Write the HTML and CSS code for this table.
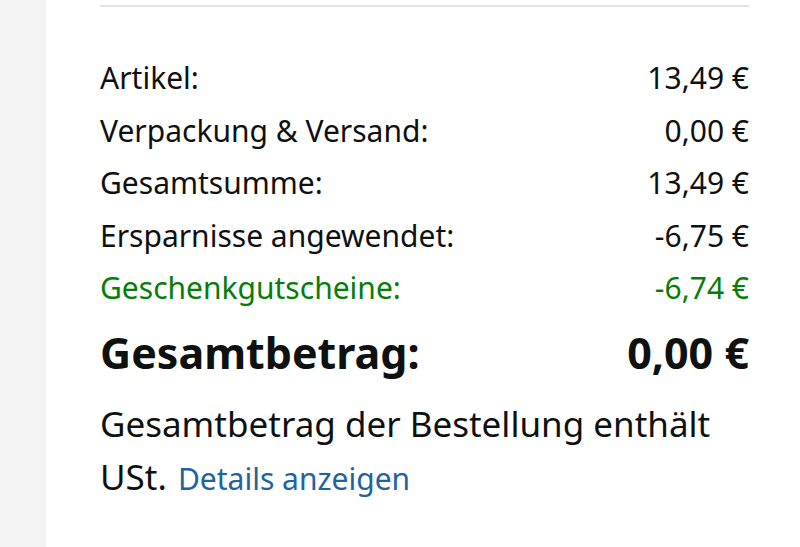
FILE: index.html
```html
<!DOCTYPE html>
<html lang="de">
<head>
<meta charset="utf-8">
<link rel="stylesheet" href="styles.css">
</head>
<body>
<div class="page">
  <aside class="side"></aside>
  <main class="content">
    <hr class="divider">
    <div class="rows">
      <div class="row"><span>Artikel:</span><span>13,49 €</span></div>
      <div class="row"><span>Verpackung &amp; Versand:</span><span>0,00 €</span></div>
      <div class="row"><span>Gesamtsumme:</span><span>13,49 €</span></div>
      <div class="row"><span>Ersparnisse angewendet:</span><span>-6,75 €</span></div>
      <div class="row green"><span>Geschenkgutscheine:</span><span>-6,74 €</span></div>
      <div class="row total"><span>Gesamtbetrag:</span><span>0,00 €</span></div>
    </div>
    <p class="note">Gesamtbetrag der Bestellung enthält USt. <a class="link" href="#">Details anzeigen</a></p>
  </main>
</div>
</body>
</html>
```
FILE: styles.css
```css
html, body {
  margin: 0;
  padding: 0;
  background: #ffffff;
}
body {
  font-family: "Noto Sans", "Open Sans", sans-serif;
  color: #0f1111;
}
.page {
  display: flex;
  min-height: 547px;
}
.side {
  width: 46px;
  flex: none;
  background: #f3f3f3;
}
.content {
  flex: 1;
  padding: 5px 51px 0 54px;
}
.divider {
  margin: 0;
  border: 0;
  border-top: 2px solid #e3e3e3;
}
.rows {
  padding-top: 45px;
}
.row {
  display: flex;
  justify-content: space-between;
  font-size: 30px;
  line-height: 52.5px;
}
.green {
  color: #067d06;
}
.total {
  font-size: 43px;
  font-weight: 700;
  line-height: 60px;
  margin-top: 8px;
}
.note {
  margin: 14px 0 0;
  font-size: 35px;
  line-height: 53px;
}
.link {
  color: #2162a1;
  text-decoration: none;
  font-size: 30px;
  line-height: 40px;
  margin-left: 2px;
}
```
